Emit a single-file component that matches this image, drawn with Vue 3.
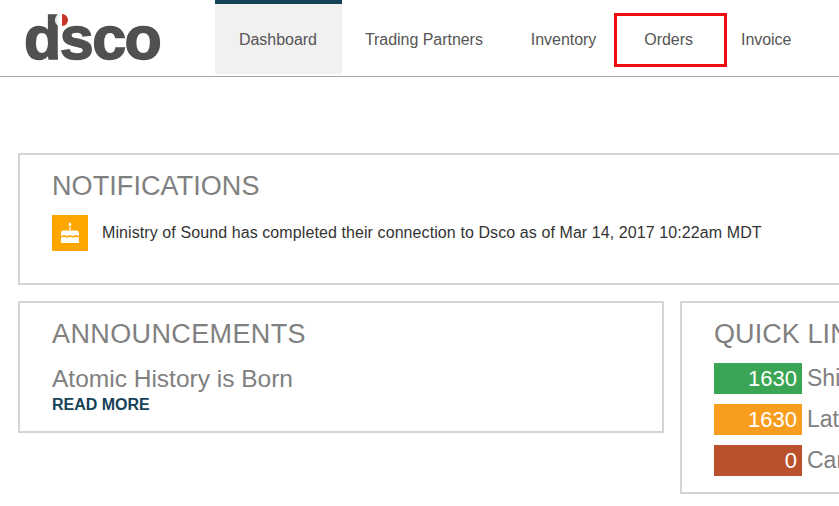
<script setup>
const navItems = [
  { label: 'Dashboard', active: true },
  { label: 'Trading Partners' },
  { label: 'Inventory' },
  { label: 'Orders', marked: true },
  { label: 'Invoice' }
]

const quickLinks = [
  { count: 1630, label: 'Shipped Orders', color: '#3aa655' },
  { count: 1630, label: 'Late Orders', color: '#f99d1f' },
  { count: 0, label: 'Cancelled Orders', color: '#bb512c' }
]
</script>

<template>
  <div class="page">
    <header class="topbar">
      <div class="logo">
        <span class="logo-text">dsco</span>
        <span class="logo-dot"></span>
      </div>
      <nav class="nav">
        <a
          v-for="item in navItems"
          :key="item.label"
          class="nav-item"
          :class="{ active: item.active }"
        >
          {{ item.label }}
          <span v-if="item.marked" class="marker"></span>
        </a>
      </nav>
    </header>

    <main class="content">
      <section class="card notifications">
        <h2>Notifications</h2>
        <div class="notice">
          <span class="notice-icon">
            <svg width="18" height="22" viewBox="0 0 18 22">
              <path d="M9 0c.9 1.200 1.300 2 1.300 2.700a1.300 1.300 0 0 1-2.600 0C7.700 2 8.100 1.200 9 0z" fill="#fff" />
              <rect x="8.300" y="4.800" width="1.400" height="3.200" fill="#fff" />
              <path d="M0 11c0-1.600 1-2.600 2.600-2.600h12.800c1.600 0 2.600 1 2.600 2.600v3c-1 0-1.500-1-3-1s-1.800 1-3 1-1.800-1-3-1-1.800 1-3 1-1.800-1-3-1-2 1-3 1z" fill="#fff" />
              <path d="M0 15.800c1 0 1.500-1 3-1s1.800 1 3 1 1.800-1 3-1 1.800 1 3 1 1.800-1 3-1 2 1 3 1V21H0z" fill="#fff" />
            </svg>
          </span>
          <p>Ministry of Sound has completed their connection to Dsco as of Mar 14, 2017 10:22am MDT</p>
        </div>
      </section>

      <div class="columns">
        <section class="card announcements">
          <h2>Announcements</h2>
          <h3>Atomic History is Born</h3>
          <a class="read-more">READ MORE</a>
        </section>

        <section class="card quick-links">
          <h2>Quick Links</h2>
          <ul>
            <li v-for="link in quickLinks" :key="link.label">
              <span class="count" :style="{ background: link.color }">{{ link.count }}</span>
              <span class="link-label">{{ link.label }}</span>
            </li>
          </ul>
        </section>
      </div>
    </main>
  </div>
</template>

<style>
html, body { margin: 0; background: #fff; overflow: hidden; }
</style>

<style scoped>
.page {
  width: 839px;
  height: 506px;
  overflow: hidden;
  font-family: "Liberation Sans", Arial, sans-serif;
}
.topbar {
  display: flex;
  height: 76px;
  border-bottom: 1px solid #aaa;
}
.logo {
  position: relative;
  width: 215px;
  flex: none;
}
.logo-text {
  display: block;
  margin: 0 0 0 24px;
  font-size: 61px;
  line-height: 76px;
  font-weight: 700;
  letter-spacing: -1.5px;
  color: #505050;
  -webkit-text-stroke: 1.5px #505050;
}
.logo-dot {
  position: absolute;
  left: 56px;
  top: 14px;
  width: 12px;
  height: 12px;
  border-radius: 50%;
  background: linear-gradient(90deg, #fff 50%, #c9352a 50%);
  box-shadow: 0 0 0 1px #fff;
}
.nav {
  display: flex;
  align-items: flex-start;
}
.nav-item {
  position: relative;
  flex: none;
  box-sizing: border-box;
  height: 74px;
  padding: 0 24px;
  line-height: 72px;
  font-size: 16px;
  letter-spacing: -.04px;
  color: #555;
  white-space: nowrap;
  border-top: 4px solid transparent;
}
.nav-item.active {
  padding-right: 25px;
  margin-right: -1px;
  background: #f1f1f1;
  border-top-color: #164257;
}
.marker {
  position: absolute;
  left: -6px;
  right: -10px;
  top: 9px;
  height: 54px;
  box-sizing: border-box;
  border: 3px solid #ee0a10;
}
.content {
  padding: 76px 0 0 18px;
  width: 1000px;
}
.card {
  box-sizing: border-box;
  border: 2px solid #d5d5d5;
  padding: 0 32px;
}
h2 {
  margin: 0;
  font-size: 27px;
  font-weight: 400;
  line-height: 32px;
  letter-spacing: .08px;
  color: #808080;
  text-transform: uppercase;
}
.announcements h2 {
  letter-spacing: .38px;
}
.notifications {
  height: 132px;
  padding-top: 15px;
}
.notice {
  display: flex;
  align-items: center;
  gap: 14px;
  margin-top: 13px;
}
.notice-icon {
  display: flex;
  align-items: center;
  justify-content: center;
  width: 36px;
  height: 36px;
  background: #ffa500;
}
.notice p {
  margin: 0;
  font-size: 16px;
  letter-spacing: .09px;
  color: #333;
  white-space: nowrap;
}
.columns {
  display: grid;
  grid-template-columns: 646px 1fr;
  gap: 16px;
  align-items: start;
  margin-top: 16px;
}
.announcements {
  height: 132px;
  padding-top: 15px;
}
h3 {
  margin: 15px 0 0;
  font-size: 24.5px;
  line-height: 28px;
  font-weight: 400;
  color: #808080;
}
.read-more {
  display: block;
  margin-top: 2px;
  font-size: 16px;
  line-height: 20px;
  font-weight: 700;
  color: #164257;
}
.quick-links {
  height: 193px;
  padding-top: 15px;
}
ul {
  display: flex;
  flex-direction: column;
  gap: 10px;
  list-style: none;
  margin: 13px 0 0;
  padding: 0;
}
li {
  display: flex;
  align-items: center;
  gap: 5px;
  font-size: 22px;
}
.count {
  box-sizing: border-box;
  width: 88px;
  height: 31px;
  padding-right: 5px;
  line-height: 31px;
  text-align: right;
  color: #fff;
}
.link-label {
  font-size: 23px;
  color: #808080;
  white-space: nowrap;
}
</style>
